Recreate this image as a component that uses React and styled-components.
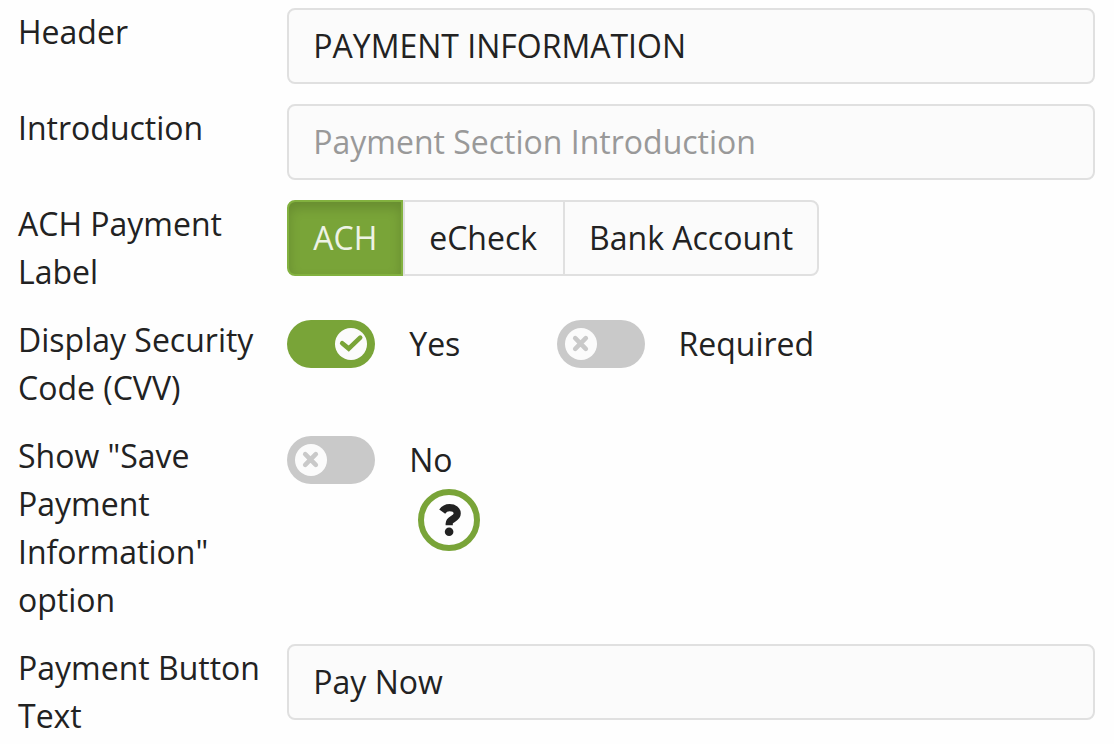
import React from 'react';
import styled, { createGlobalStyle } from 'styled-components';

const GlobalStyle = createGlobalStyle`
  *, *::before, *::after {
    box-sizing: border-box;
  }

  body {
    margin: 0;
    background: #fefefe;
    color: #222;
    font-family: 'Open Sans', 'Noto Sans', sans-serif;
    font-size: 32px;
    line-height: 48px;
  }

  input, button {
    font: inherit;
    color: inherit;
  }
`;

// layout
const Form = styled.form`
  display: flex;
  flex-direction: column;
  gap: 20px;
  padding: 8px 19px 4px 18px;
`;

const Row = styled.div`
  display: grid;
  grid-template-columns: 1fr 3fr;
  align-items: start;
`;

const Label = styled.label`
  padding-right: 8px;
`;

const Toggles = styled.div`
  display: grid;
  grid-template-columns: repeat(3, 1fr);
  padding-top: 4px;
`;

// text box
const TextInput = styled.input`
  width: 100%;
  height: 76px;
  padding: 0 24px 2px;
  border: 2px solid #e0e0e0;
  border-radius: 8px;
  outline: none;
  background: #fbfbfb;

  &::placeholder {
    color: #999;
    opacity: 1;
  }
`;

// button group
const Segments = styled.div`
  display: flex;
`;

const Segment = styled.label`
  position: relative;
  height: 76px;
  padding: 12px 26px 12px 24px;
  border: 2px solid #e0e0e0;
  border-right-width: 0;
  background: #fbfbfb;
  cursor: pointer;

  &:first-child {
    border-radius: 8px 0 0 8px;
  }

  &:last-child {
    padding-right: 24px;
    border-right-width: 2px;
    border-radius: 0 8px 8px 0;
  }

  &:has(input:checked) {
    padding-right: 24px;
    border-color: #82b13f;
    border-right-width: 2px;
    background: #79a438;
    box-shadow: inset 0 6px 12px rgba(0, 0, 0, 0.15);
    color: #eef3e6;
  }
`;

const HiddenInput = styled.input`
  position: absolute;
  inset: 0;
  width: 100%;
  height: 100%;
  margin: 0;
  opacity: 0;
  cursor: pointer;
`;

// switch
const SwitchLabel = styled.label`
  display: flex;
  align-items: center;
  gap: 34px;
  cursor: pointer;
`;

const Track = styled.span`
  position: relative;
  display: flex;
  flex: none;
  justify-content: ${(props) => (props.$on ? 'flex-end' : 'flex-start')};
  width: 88px;
  height: 48px;
  padding: 8px;
  border-radius: 24px;
  background: ${(props) => (props.$on ? '#79a438' : '#c9c9c9')};
  color: ${(props) => (props.$on ? '#79a438' : '#c9c9c9')};
`;

const Knob = styled.svg`
  width: 32px;
  height: 32px;
  border-radius: 50%;
  background: #fbfbfb;
  fill: none;
  stroke: currentColor;
  stroke-width: 4.6;
  stroke-linecap: round;
`;

const HelpButton = styled.button`
  display: block;
  width: 62px;
  height: 62px;
  margin: 5px 0 0 131px;
  padding: 0;
  border: 6px solid #79a438;
  border-radius: 50%;
  background: #fefefe;
  cursor: pointer;
`;

const HelpIcon = styled.svg`
  display: block;
  width: 50px;
  height: 50px;
`;

const achLabels = ['ACH', 'eCheck', 'Bank Account'];

const Switch = ({ id, checked, onChange, children }) => (
  <SwitchLabel htmlFor={id}>
    <Track $on={checked}>
      <HiddenInput id={id} type="checkbox" role="switch" checked={checked} onChange={onChange} />
      <Knob viewBox="0 0 32 32" aria-hidden="true">
        <path d={checked ? 'M7.2 15.2L13.7 20.6L25.2 9.6' : 'M10.2 10.2L20.8 20.8M20.8 10.2L10.2 20.8'} />
      </Knob>
    </Track>
    {children}
  </SwitchLabel>
);

const Question = () => (
  <HelpIcon viewBox="0 0 50 50" aria-hidden="true">
    <path
      d="M18.2 16.6C20.2 13.7 22.5 12.6 25.6 12.6C30.2 12.6 33.2 15 33.2 18.6C33.2 24.2 25.2 23.4 25.2 28.6V30.2"
      fill="none"
      stroke="currentColor"
      strokeWidth="7.2"
    />
    <circle cx="25.1" cy="36.7" r="4.3" fill="currentColor" />
  </HelpIcon>
);

// React component
class App extends React.Component {
  constructor(props) {
    super(props);
    this.state = {
      header: 'PAYMENT INFORMATION',
      introduction: '',
      achLabel: 'ACH',
      displayCvv: true,
      requireCvv: false,
      showSave: false,
      buttonText: 'Pay Now',
    };
  }

  handleText(event) {
    this.setState({ [event.target.name]: event.target.value });
  }

  handleToggle(key) {
    this.setState({ [key]: !this.state[key] });
  }

  render() {
    const { header, introduction, achLabel, displayCvv, requireCvv, showSave, buttonText } = this.state;
    return (
      <>
        <GlobalStyle />
        <Form onSubmit={(event) => event.preventDefault()}>
          <Row>
            <Label htmlFor="header">Header</Label>
            <TextInput id="header" name="header" type="text" value={header} onChange={(e) => this.handleText(e)} />
          </Row>
          <Row>
            <Label htmlFor="introduction">Introduction</Label>
            <TextInput
              id="introduction"
              name="introduction"
              type="text"
              placeholder="Payment Section Introduction"
              value={introduction}
              onChange={(e) => this.handleText(e)}
            />
          </Row>
          <Row>
            <Label as="span" id="ach-label">ACH Payment Label</Label>
            <Segments role="radiogroup" aria-labelledby="ach-label">
              {
                achLabels.map((label) => (
                  <Segment key={label}>
                    <HiddenInput
                      type="radio"
                      name="achLabel"
                      value={label}
                      checked={achLabel === label}
                      onChange={(e) => this.handleText(e)}
                    />
                    {label}
                  </Segment>
                ))
              }
            </Segments>
          </Row>
          <Row>
            <Label htmlFor="display-cvv">Display Security Code (CVV)</Label>
            <Toggles>
              <Switch id="display-cvv" checked={displayCvv} onChange={() => this.handleToggle('displayCvv')}>
                {displayCvv ? 'Yes' : 'No'}
              </Switch>
              <Switch id="require-cvv" checked={requireCvv} onChange={() => this.handleToggle('requireCvv')}>
                Required
              </Switch>
            </Toggles>
          </Row>
          <Row>
            <Label htmlFor="show-save">Show "Save Payment Information" option</Label>
            <Toggles>
              <div>
                <Switch id="show-save" checked={showSave} onChange={() => this.handleToggle('showSave')}>
                  {showSave ? 'Yes' : 'No'}
                </Switch>
                <HelpButton type="button" aria-label="Help"><Question /></HelpButton>
              </div>
            </Toggles>
          </Row>
          <Row>
            <Label htmlFor="button-text">Payment Button Text</Label>
            <TextInput id="button-text" name="buttonText" type="text" value={buttonText} onChange={(e) => this.handleText(e)} />
          </Row>
        </Form>
      </>
    );
  }
}

export default App;
